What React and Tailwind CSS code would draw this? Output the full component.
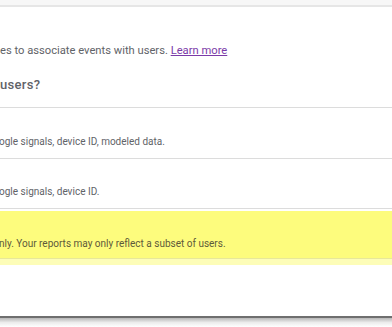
export default function App() {
  return (
    <div
      className="w-[392px] h-[327px] overflow-hidden bg-white flex flex-col"
      style={{ fontFamily: "Roboto, 'Liberation Sans', sans-serif" }}
    >
      {/* top edge of the previous card */}
      <div className="h-[7px] bg-[#f7f7f7] border-b-2 border-[#e6e6e6] shrink-0" />

      {/* description + question */}
      <div className="h-[101px] shrink-0 border-b border-[#dcdcdc] flex flex-col">
        <p className="mt-[37px] text-[11.2px] leading-[14px] text-[#5f6368] whitespace-nowrap">
          es to associate events with users.{" "}
          <a href="#" className="text-[#7b3aa8] underline">Learn more</a>
        </p>
        <h3 className="mt-[19px] text-[13px] leading-[16px] font-medium text-[#5f6368] tracking-[0.3px] whitespace-nowrap">
          users?
        </h3>
      </div>

      {/* option rows */}
      <div className="h-[51px] shrink-0 border-b border-[#dcdcdc] flex items-end pb-[10px]">
        <span className="text-[10px] leading-[12px] text-[#5f6368] -ml-[1px] whitespace-nowrap">
          ogle signals, device ID, modeled data.
        </span>
      </div>
      <div className="h-[50px] shrink-0 border-b border-[#dcdcdc] flex items-end pb-[10px]">
        <span className="text-[10px] leading-[12px] text-[#5f6368] -ml-[1px] whitespace-nowrap">
          ogle signals, device ID.
        </span>
      </div>

      {/* highlighted option */}
      <div className="h-[2px] shrink-0 bg-white" />
      <div className="h-[47px] shrink-0 bg-[#fdfc7d] flex items-end pb-[8px]">
        <span className="text-[10px] leading-[12px] text-[#5e5a3a] -ml-[1px] whitespace-nowrap">
          nly. Your reports may only reflect a subset of users.
        </span>
      </div>
      <div className="h-[7px] shrink-0 bg-[#fdfdb8] border-t border-[#e8e89a]" />

      {/* white footer to the card's lower edge */}
      <div className="h-[51px] shrink-0 bg-white" />
      <div className="h-[2px] shrink-0 bg-[#6f6f6f]" />
      <div className="flex-1 bg-gradient-to-b from-[#b8b8b8] via-[#ececec] to-white" />
    </div>
  );
}
